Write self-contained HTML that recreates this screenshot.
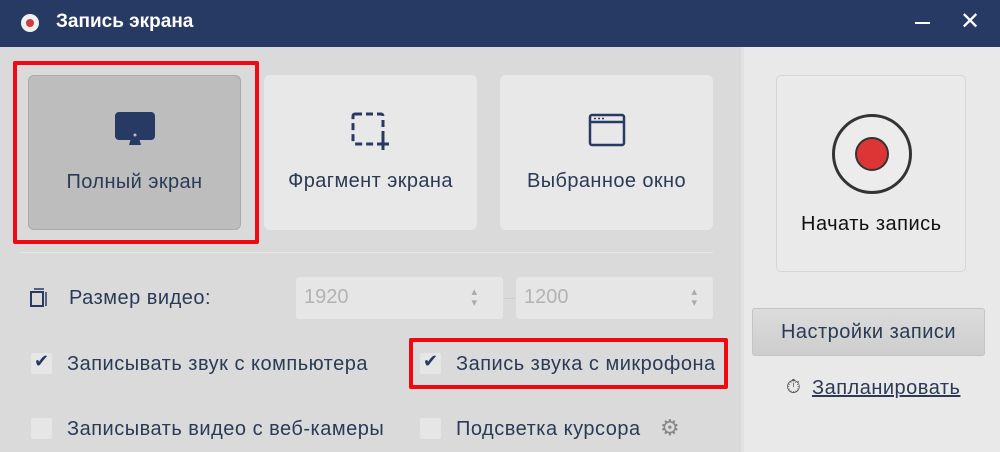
<!DOCTYPE html>
<html><head><meta charset="utf-8"><style>
*{margin:0;padding:0;box-sizing:border-box}
body{width:1000px;height:452px;overflow:hidden;background:#dadada;font-family:"Liberation Sans","DejaVu Sans",sans-serif;position:relative}
.a{position:absolute}
.title{left:0;top:0;width:1000px;height:47px;background:#273a63;color:#fff}
.tile{background:#e8e8e8;border-radius:6px;top:75px;width:213px;height:155px;color:#2b3a55;font-size:20px;letter-spacing:0.4px;text-align:center}
.tile span{position:absolute;left:0;right:0;top:95px}
.tile svg{position:absolute;left:50%;top:37px;transform:translateX(-50%)}
.red{border:4px solid #f00813;border-radius:2px}
.inp{background:#e6e6e6;border-radius:3px;height:42px;top:277px;color:#b3b3b3;font-size:20px;padding:9px 8px}
.lbl{color:#2b3a55;font-size:20px;letter-spacing:0.5px}
.cb{width:21px;height:21px;background:#e6e6e6;border-radius:2px}
</style></head><body>
<div class="a title">
 <div class="a" style="left:21px;top:14px;width:18px;height:18px;border-radius:50%;background:#f0f0f0"></div>
 <div class="a" style="left:26px;top:19px;width:8px;height:8px;border-radius:50%;background:#d03a3a"></div>
 <div class="a" style="left:56px;top:11px;font-size:19px;font-weight:bold">Запись экрана</div>
 <div class="a" style="left:915px;top:22px;width:15px;height:2px;background:#fff"></div>
 <div class="a" style="left:960px;top:7px;font-size:24px">✕</div>
</div>
<div class="a" style="left:741px;top:47px;width:259px;height:405px;background:#e9e9e9;border-left:3px solid #e2e2e2"></div>
<div class="a red" style="left:13px;top:61px;width:246px;height:183px"></div>
<div class="a tile" style="left:28px;background:#bdbdbd;border:1px solid #aaa">
 <svg width="40" height="36" viewBox="0 0 40 36" style="top:36px"><rect x="2" y="2" width="36" height="24" rx="2" fill="none" stroke="#273a63" stroke-width="4"/><rect x="4" y="4" width="32" height="20" fill="#273a63"/><circle cx="20" cy="23" r="1.5" fill="#bdbdbd"/><path d="M16 26 L24 26 L26 33 L14 33 Z" fill="#273a63"/></svg>
 <span>Полный экран</span></div>
<div class="a tile" style="left:264px">
 <svg width="40" height="40" viewBox="0 0 40 40"><rect x="2" y="2" width="30" height="30" rx="2" fill="none" stroke="#273a63" stroke-width="3" stroke-dasharray="7 4"/><path d="M32 26v12M26 32h12" stroke="#273a63" stroke-width="3"/></svg>
 <span>Фрагмент экрана</span></div>
<div class="a tile" style="left:500px">
 <svg width="40" height="36" viewBox="0 0 40 36"><rect x="3" y="3" width="34" height="30" rx="2" fill="none" stroke="#273a63" stroke-width="2.5"/><path d="M3 10h34" stroke="#273a63" stroke-width="2.5"/><path d="M7 6.5h2M11 6.5h2M15 6.5h2" stroke="#273a63" stroke-width="1.5"/></svg>
 <span>Выбранное окно</span></div>
<div class="a" style="left:20px;top:252px;width:693px;height:1px;background:#e6e6e6"></div>
<svg class="a" style="left:29px;top:288px" width="20" height="20" viewBox="0 0 20 20"><rect x="2" y="4" width="12" height="14" fill="none" stroke="#273a63" stroke-width="2"/><path d="M5 1h10M17 4v14" stroke="#273a63" stroke-width="1.5"/></svg>
<div class="a lbl" style="left:69px;top:287px">Размер видео:</div>
<div class="a inp" style="left:296px;width:207px">1920<span class="a" style="right:26px;top:10px;font-size:11px;line-height:11px;color:#aaa">▴<br>▾</span></div>
<div class="a" style="left:504px;top:298px;width:11px;height:1px;background:#ccc"></div>
<div class="a inp" style="left:516px;width:197px">1200<span class="a" style="right:16px;top:10px;font-size:11px;line-height:11px;color:#aaa">▴<br>▾</span></div>
<div class="a cb" style="left:31px;top:353px"></div><div class="a" style="left:34px;top:351px;color:#273a63;font-size:18px">✔</div>
<div class="a lbl" style="left:67px;top:353px">Записывать звук с компьютера</div>
<div class="a red" style="left:409px;top:338px;width:319px;height:51px"></div>
<div class="a cb" style="left:420px;top:353px"></div><div class="a" style="left:423px;top:351px;color:#273a63;font-size:18px">✔</div>
<div class="a lbl" style="left:456px;top:353px">Запись звука с микрофона</div>
<div class="a cb" style="left:31px;top:418px"></div>
<div class="a lbl" style="left:67px;top:418px">Записывать видео с веб-камеры</div>
<div class="a cb" style="left:420px;top:418px"></div>
<div class="a lbl" style="left:456px;top:418px">Подсветка курсора</div>
<div class="a" style="left:660px;top:415px;color:#888;font-size:22px">⚙</div>
<div class="a" style="left:776px;top:75px;width:190px;height:197px;border:1px solid #d6d6d6;border-radius:5px;background:#eaeaea"></div>
<div class="a" style="left:832px;top:114px;width:80px;height:80px;border-radius:50%;border:3px solid #333;background:#ececec"></div>
<div class="a" style="left:855px;top:137px;width:34px;height:34px;border-radius:50%;background:#dd3535;border:2px solid #333"></div>
<div class="a" style="left:801px;top:213px;font-size:20px;letter-spacing:0.5px;color:#111">Начать запись</div>
<div class="a" style="left:752px;top:308px;width:233px;height:48px;border:1px solid #c4c4c4;border-radius:3px;background:linear-gradient(#dcdcdc,#cdcdcd);color:#2b3a55;font-size:20px;letter-spacing:0.5px;text-align:center;line-height:46px">Настройки записи</div>
<div class="a" style="left:786px;top:377px;font-size:19px;color:#555">⏱</div>
<div class="a" style="left:812px;top:377px;font-size:20px;letter-spacing:0.5px;color:#2b3a55;text-decoration:underline">Запланировать</div>
</body></html>
